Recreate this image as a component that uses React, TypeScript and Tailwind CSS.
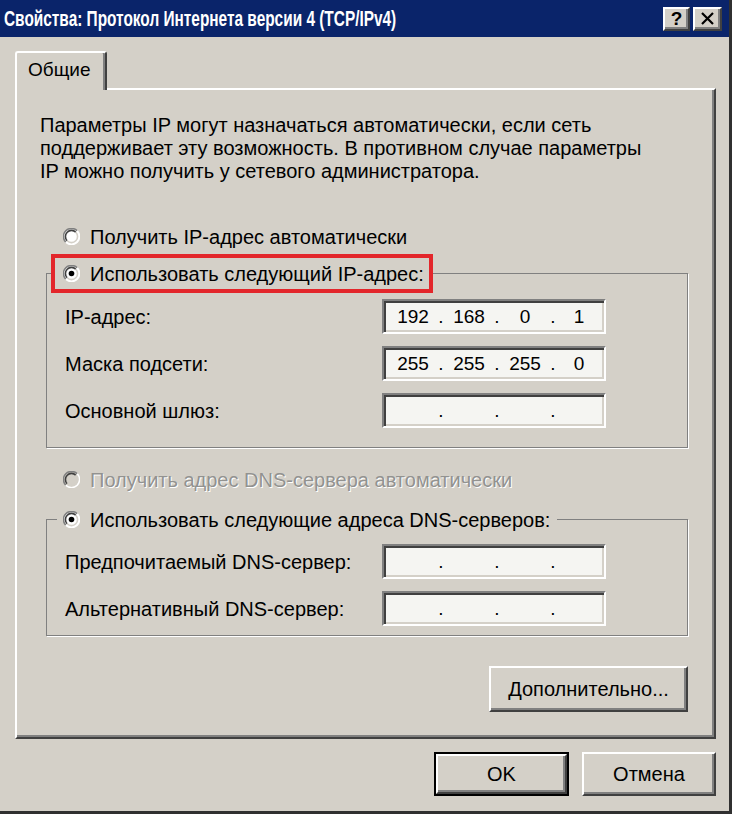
import React from 'react';

const raised =
  'border-2 border-t-white border-l-white border-r-[#404040] border-b-[#404040] shadow-[inset_-2px_-2px_0_#808080]';
const sunken =
  'border-2 border-t-[#808080] border-l-[#808080] border-r-white border-b-white shadow-[inset_2px_2px_0_#404040,inset_-2px_-2px_0_#d4d0c8]';

function Radio({ checked = false, disabled = false }: { checked?: boolean; disabled?: boolean }) {
  return (
    <svg width="17" height="17" viewBox="0 0 17 17" className="shrink-0">
      <circle cx="8.5" cy="8.5" r="8" fill={disabled ? '#d4d0c8' : '#ffffff'} />
      <path d="M14.2 2.8 A8 8 0 0 0 2.8 14.2" stroke="#808080" strokeWidth="1.6" fill="none" />
      <path d="M12.8 4.2 A6 6 0 0 0 4.2 12.8" stroke="#404040" strokeWidth="1.6" fill="none" />
      <path d="M2.8 14.2 A8 8 0 0 0 14.2 2.8" stroke="#ffffff" strokeWidth="1.6" fill="none" />
      <path d="M4.2 12.8 A6 6 0 0 0 12.8 4.2" stroke="#d4d0c8" strokeWidth="1.6" fill="none" />
      {checked && <circle cx="8.5" cy="8.5" r="2.8" fill="#000000" />}
    </svg>
  );
}

function IpField({ parts }: { parts: string[] }) {
  return (
    <div className={`w-[224px] h-[35px] bg-[#f5f5f2] ${sunken} flex items-center`}>
      <div className="grid grid-cols-[40px_16px_40px_16px_40px_16px_36px] pl-[9px] items-center text-center leading-none text-[19px]">
        <span>{parts[0]}</span>
        <span>.</span>
        <span>{parts[1]}</span>
        <span>.</span>
        <span>{parts[2]}</span>
        <span>.</span>
        <span>{parts[3]}</span>
      </div>
    </div>
  );
}

function FieldRow({ label, parts }: { label: string; parts: string[] }) {
  return (
    <div className="flex items-center">
      <div className="w-[317px]">{label}</div>
      <IpField parts={parts} />
    </div>
  );
}

function Button({ children, w, def = false }: { children: React.ReactNode; w: string; def?: boolean }) {
  if (def) {
    return (
      <div className={`${w} h-[44px] border-2 border-black`}>
        <div className={`w-full h-full ${raised} flex items-center justify-center`}>{children}</div>
      </div>
    );
  }
  return <div className={`${w} h-[44px] ${raised} flex items-center justify-center`}>{children}</div>;
}

export default function App() {
  const empty = ['', '', '', ''];
  return (
    <div className="w-[732px] h-[814px] bg-[#d4d0c8] border-r-[3px] border-b-[3px] border-[#303030] flex flex-col text-[20px] text-black font-['Liberation_Sans',Arial,sans-serif] overflow-hidden">
      {/* title bar */}
      <div className="h-[37px] bg-[#0a246a] flex items-center justify-between pl-[4px] pr-[7px] shrink-0">
        <span className="inline-block origin-left scale-x-[0.7] whitespace-nowrap text-white text-[22px] font-bold">
          Свойства: Протокол Интернета версии 4 (TCP/IPv4)
        </span>
        <div className="flex gap-[3px]">
          <div className={`w-[27px] h-[24px] bg-[#d4d0c8] ${raised} flex items-center justify-center font-bold text-[19px] leading-none`}>
            ?
          </div>
          <div className={`w-[29px] h-[24px] bg-[#d4d0c8] ${raised} flex items-center justify-center`}>
            <svg width="15" height="13" viewBox="0 0 15 13">
              <path d="M2 1 L13 12 M13 1 L2 12" stroke="#000" strokeWidth="2.2" />
            </svg>
          </div>
        </div>
      </div>

      <div className="flex-1 pl-[15px] pr-[13px] pt-[14px] flex flex-col">
        {/* tabs */}
        <div className="flex">
          <div className="relative z-10 -mb-[2px] w-[92px] h-[39px] bg-[#d4d0c8] border-t-2 border-l-2 border-r-2 border-t-white border-l-white border-r-[#404040] rounded-t-[3px] shadow-[inset_-2px_0_0_#808080] flex items-center pl-[11px] pb-[2px] text-[19px]">
            Общие
          </div>
        </div>

        {/* panel */}
        <div className={`h-[651px] ${raised} pl-[23px] pt-[24px]`}>
          <p className="leading-[23px] w-[615px]">
            Параметры IP могут назначаться автоматически, если сеть поддерживает эту возможность. В противном случае параметры
            IP можно получить у сетевого администратора.
          </p>

          <div className="flex items-center gap-[10px] ml-[23px] mt-[42px] h-[23px]">
            <Radio />
            <span>Получить IP-адрес автоматически</span>
          </div>

          <fieldset className="ml-[6px] mt-[6px] w-[642px] border border-[#808080] shadow-[1px_1px_0_#fff] px-0 pt-[6px] pb-[19px]">
            <legend className="ml-[4px]">
              <div className="h-[39px] border-4 border-[#e3262b] pl-[8px] pr-[5px] flex items-center gap-[10px]">
                <Radio checked />
                <span>Использовать следующий IP-адрес:</span>
              </div>
            </legend>
            <div className="pl-[18px] flex flex-col gap-[12px]">
              <FieldRow label="IP-адрес:" parts={['192', '168', '0', '1']} />
              <FieldRow label="Маска подсети:" parts={['255', '255', '255', '0']} />
              <FieldRow label="Основной шлюз:" parts={empty} />
            </div>
          </fieldset>

          <div className="flex items-center gap-[10px] ml-[23px] mt-[20px] h-[23px] text-[#929290] [text-shadow:1px_1px_0_#ffffff]">
            <Radio disabled />
            <span>Получить адрес DNS-сервера автоматически</span>
          </div>

          <fieldset className="ml-[6px] mt-[17px] w-[642px] border border-[#808080] shadow-[1px_1px_0_#fff] px-0 pt-[13px] pb-[9px]">
            <legend className="ml-[10px] pl-[6px] pr-[7px]">
              <div className="h-[23px] flex items-center gap-[10px]">
                <Radio checked />
                <span>Использовать следующие адреса DNS-серверов:</span>
              </div>
            </legend>
            <div className="pl-[18px] flex flex-col gap-[12px]">
              <FieldRow label="Предпочитаемый DNS-сервер:" parts={empty} />
              <FieldRow label="Альтернативный DNS-сервер:" parts={empty} />
            </div>
          </fieldset>

          <div className="ml-[6px] w-[642px] mt-[30px] flex justify-end">
            <div className={`w-[199px] h-[46px] ${raised} flex items-center justify-center`}>Дополнительно...</div>
          </div>
        </div>

        {/* bottom buttons */}
        <div className="flex justify-end gap-[13px] mt-[13px]">
          <Button w="w-[135px]" def>
            OK
          </Button>
          <Button w="w-[134px]">Отмена</Button>
        </div>
      </div>
    </div>
  );
}
